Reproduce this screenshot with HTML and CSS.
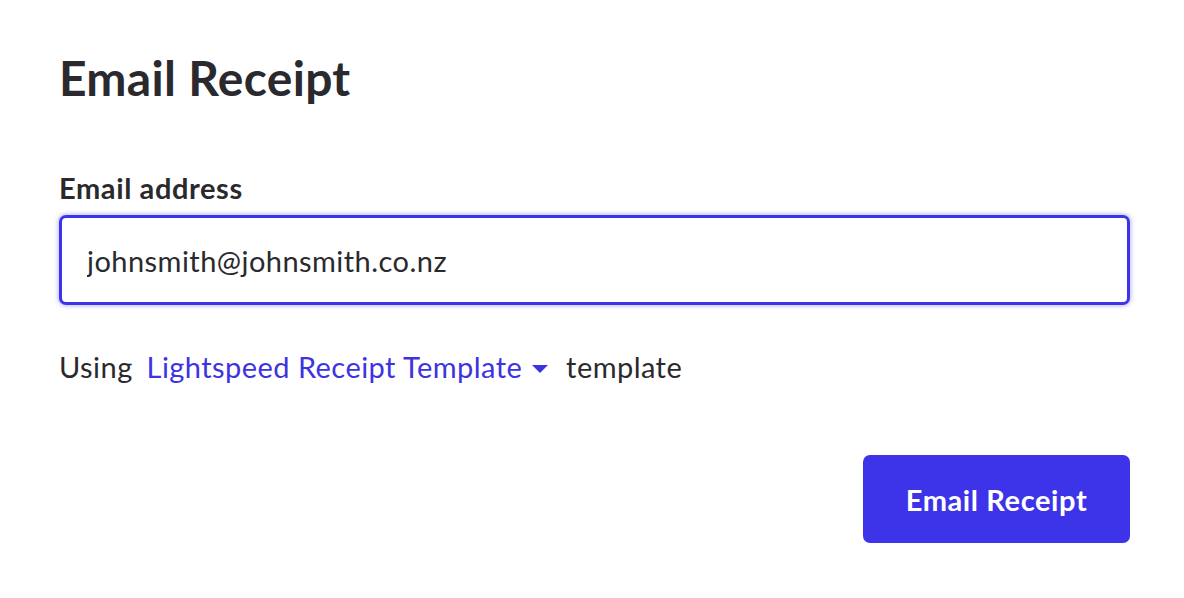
FILE: index.html
```html
<!DOCTYPE html>
<html lang="en">

<head>
    <meta charset="UTF-8">
    <meta name="viewport" content="width=device-width, initial-scale=1.0">
    <title>Email Receipt</title>
    <link rel="stylesheet" href="styles.css">
</head>

<body>
    <div class="container">
        <h1>Email Receipt</h1>
        <label class="label" for="email">Email address</label>
        <div class="input-field">
            <input type="email" id="email" value="johnsmith@johnsmith.co.nz">
        </div>
        <p class="template">Using <a href="#" class="template-link">Lightspeed Receipt Template<span class="caret"></span></a> template</p>
        <div class="actions">
            <button class="btn">Email Receipt</button>
        </div>
    </div>
</body>

</html>
```

FILE: styles.css
```css
* {
    margin: 0;
    padding: 0;
    box-sizing: border-box;
}

body {
    background-color: #fff;
    font-family: Lato, "Noto Sans", sans-serif;
    color: #2a2a2e;
}

.container {
    padding: 48px 54px 0 59px;
}

h1 {
    font-size: 48px;
    font-weight: 700;
    line-height: 60px;
    letter-spacing: 0.3px;
    margin-bottom: 63px;
}

.label {
    display: block;
    font-size: 29px;
    font-weight: 700;
    line-height: 34px;
    letter-spacing: 0.6px;
    margin-bottom: 10px;
}

.input-field input {
    width: 100%;
    height: 90px;
    padding: 0 25px;
    font-family: inherit;
    font-size: 29px;
    letter-spacing: 0.45px;
    color: #2a2a2e;
    border: 3px solid #3d33e9;
    border-radius: 7px;
    outline: none;
    box-shadow: 0 0 4px 1px rgba(61, 51, 233, 0.35);
}

.template {
    font-size: 29px;
    line-height: 34px;
    letter-spacing: 0.45px;
    margin-top: 45px;
}

.template-link {
    color: #3d33e0;
    text-decoration: none;
    margin: 0 10px 0 6px;
}

.caret {
    display: inline-block;
    width: 0;
    height: 0;
    margin-left: 10px;
    border-left: 8px solid transparent;
    border-right: 8px solid transparent;
    border-top: 8px solid #3d33e0;
    vertical-align: middle;
    position: relative;
    top: -2px;
}

.actions {
    display: flex;
    justify-content: flex-end;
    margin-top: 71px;
}

.btn {
    width: 267px;
    height: 88px;
    font-family: inherit;
    font-size: 29px;
    font-weight: 700;
    letter-spacing: 0.6px;
    background-color: #3d33e9;
    color: #fff;
    border: none;
    border-radius: 7px;
    cursor: pointer;
}
```
